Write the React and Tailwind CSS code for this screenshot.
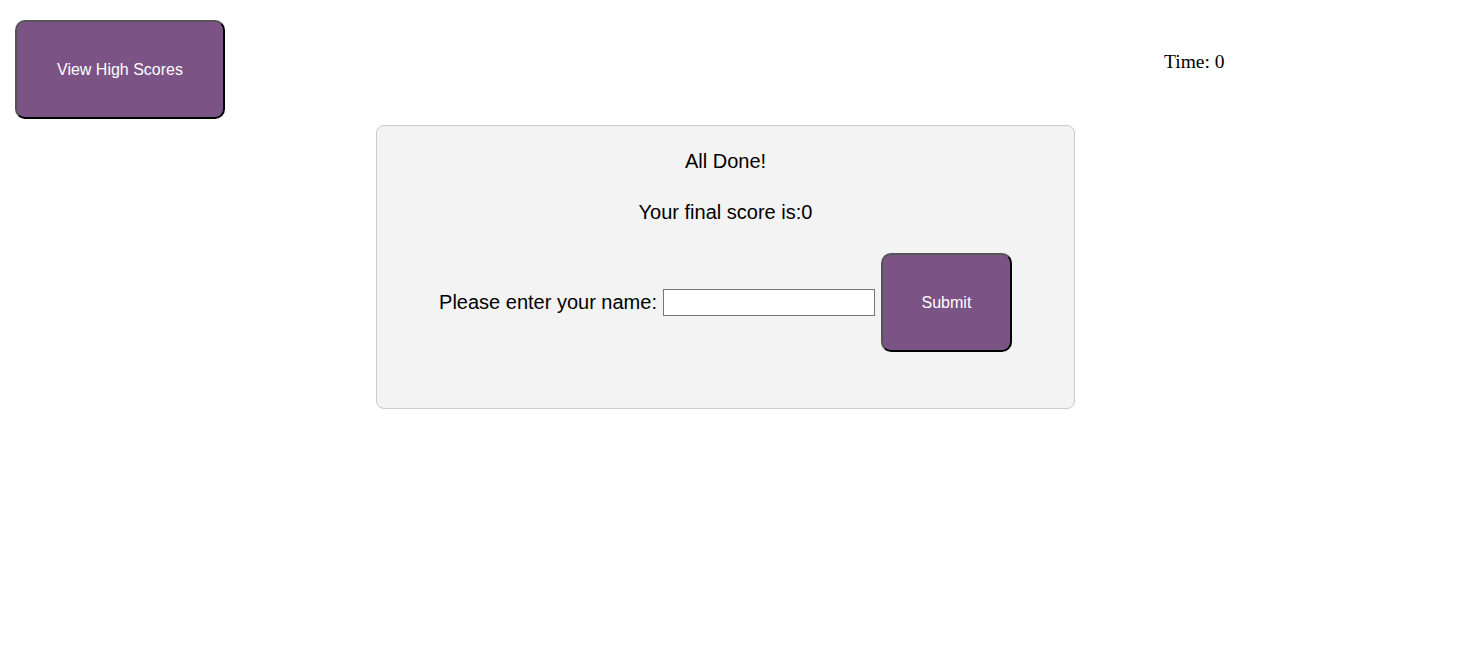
export default function App() {
  const btn =
    "flex items-center justify-center bg-[#7b5385] text-white text-[16px] rounded-[10px] border-2 border-t-[#555] border-l-[#555] border-r-black border-b-black";
  return (
    <div className="min-h-[657px] bg-white" style={{ fontFamily: '"Liberation Sans", Arial, sans-serif' }}>
      <div className="flex items-start">
        <button className={`${btn} ml-[15px] mt-[20px] w-[210px] h-[99px]`}>View High Scores</button>
        <div
          className="ml-[939px] mt-[51px] text-[19.5px] leading-[22px] text-black"
          style={{ fontFamily: '"Liberation Serif", "Times New Roman", serif' }}
        >
          Time: 0
        </div>
      </div>
      <div className="ml-[376px] mt-[6px] w-[699px] h-[284px] bg-[#f3f3f3] border border-[#cccccc] rounded-[8px] pt-[24px] text-black">
        <p className="text-center text-[20px] leading-[23px]">All Done!</p>
        <p className="text-center text-[20px] leading-[23px] mt-[28px]">Your final score is:0</p>
        <div className="mt-[29px] flex items-center justify-center gap-[6px]">
          <span className="text-[20px] leading-[23px]">Please enter your name:</span>
          <input type="text" className="w-[212px] h-[27px] bg-white border border-[#767676] outline-none px-1" />
          <button className={`${btn} w-[131px] h-[99px]`}>Submit</button>
        </div>
      </div>
    </div>
  );
}
